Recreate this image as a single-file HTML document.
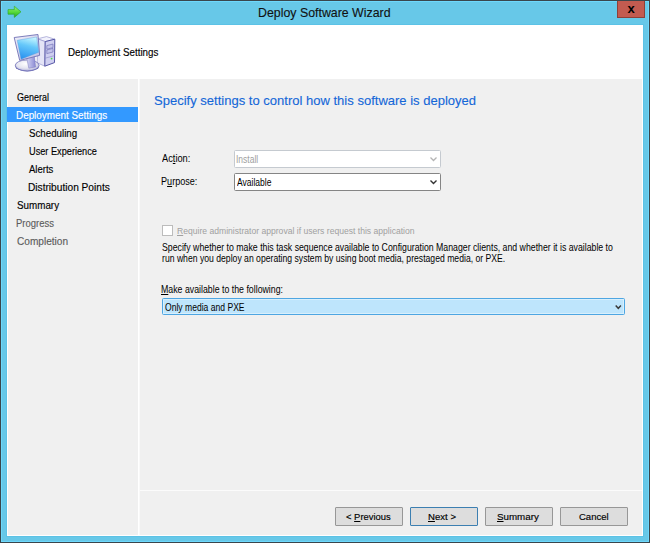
<!DOCTYPE html>
<html><head><meta charset="utf-8"><title>Deploy Software Wizard</title>
<style>
html,body{margin:0;padding:0;width:650px;height:543px;overflow:hidden;background:#67c8e8}
body{position:relative;font-family:"Liberation Sans",sans-serif}
.a{position:absolute;box-sizing:border-box}
.t{position:absolute;white-space:pre;transform-origin:0 0;font-family:"Liberation Sans",sans-serif}
.t u{text-decoration:underline;text-underline-offset:1px}
.btn{position:absolute;box-sizing:border-box;height:19px;width:68px;top:507px;background:#dddddd;border:1px solid #979797;border-radius:1px}
</style></head><body>
<!-- window frame -->
<div class="a" style="left:0;top:0;width:650px;height:543px;border:1px solid #3a464c"></div>
<div class="a" style="left:1px;top:1px;width:648px;height:541px;border:1px solid #6ed8fc"></div>
<!-- darker cyan edge around client -->
<div class="a" style="left:6px;top:24px;width:638px;height:513px;border:1px solid #5cc2e6"></div>
<!-- title icon: green arrow -->
<svg class="a" style="left:6px;top:4px" width="18" height="16" viewBox="0 0 18 16">
 <defs><linearGradient id="ga" x1="0" y1="0" x2="0" y2="1"><stop offset="0" stop-color="#9af47c"/><stop offset="0.55" stop-color="#54d83a"/><stop offset="1" stop-color="#28a826"/></linearGradient></defs>
 <path d="M2 5.6 H8.3 V2.2 L15 7.8 L8.3 13.4 V10.2 H2 Z" fill="url(#ga)" stroke="#2aa522" stroke-width="0.6"/>
</svg>
<!-- close button -->
<div class="a" style="left:617px;top:1px;width:28px;height:17px;background:#c35b50;border:1px solid #8e4038;border-top:none"></div>
<span class="a" style="left:627.5px;top:1px;font:bold 13px/15px 'Liberation Sans',sans-serif;color:#000">x</span>
<!-- client -->
<div class="a" style="left:7px;top:25px;width:636px;height:511px;background:#f0f0f0"></div>
<div class="a" style="left:7px;top:25px;width:636px;height:54px;background:#fff"></div>
<div class="a" style="left:7px;top:79px;width:1px;height:457px;background:#fff"></div>
<div class="a" style="left:642px;top:79px;width:1px;height:457px;background:#fff"></div>
<div class="a" style="left:7px;top:535px;width:636px;height:1px;background:#fff"></div>
<!-- nav separator -->
<div class="a" style="left:138px;top:79px;width:1px;height:456px;background:#fff"></div>
<div class="a" style="left:139px;top:79px;width:1px;height:456px;background:#f9f9f9"></div>
<!-- bottom bar separator -->
<div class="a" style="left:140px;top:490px;width:502px;height:1px;background:#fbfbfb"></div>
<!-- nav selection -->
<div class="a" style="left:7px;top:107px;width:131px;height:15px;background:#3399ff"></div>
<!-- header icon -->
<div class="a" style="left:10px;top:30px;width:50px;height:45px"><svg width="50" height="45" viewBox="10 30 50 45" style="position:absolute;left:0;top:0">
 <defs>
  <linearGradient id="scr" x1="0.6" y1="0" x2="0.35" y2="1"><stop offset="0" stop-color="#c4f6ff"/><stop offset="0.4" stop-color="#66c8fa"/><stop offset="1" stop-color="#2a92f0"/></linearGradient>
  <linearGradient id="frm" x1="0" y1="0" x2="1" y2="1"><stop offset="0" stop-color="#f0f0fa"/><stop offset="1" stop-color="#c0c0e4"/></linearGradient>
  <linearGradient id="twr" x1="0" y1="0" x2="1" y2="0"><stop offset="0" stop-color="#ececfa"/><stop offset="1" stop-color="#c8c8ec"/></linearGradient>
  <radialGradient id="bas" cx="0.45" cy="0.35" r="0.75"><stop offset="0" stop-color="#ffffff"/><stop offset="0.55" stop-color="#e4e4f0"/><stop offset="1" stop-color="#9a9ad0"/></radialGradient>
 </defs>
 <!-- tower -->
 <path d="M37.5 38.8 L46.5 36.6 L54.8 39.2 L45.2 41.6 Z" fill="#f2f2fc" stroke="#8a8ac6" stroke-width="0.6"/>
 <path d="M37.5 38.8 L45.2 41.6 L44.8 66.2 L37.2 62.8 Z" fill="#e4e4f6" stroke="#8a8ac6" stroke-width="0.6"/>
 <path d="M45.2 41.6 L54.8 39.2 L54.5 62.6 L44.8 66.2 Z" fill="#cfcff0" stroke="#5656a6" stroke-width="1"/>
 <path d="M46.8 45.6 L53 44 L53 47.6 L46.8 49.2 Z M46.8 50 L53 48.4 L53 52 L46.8 53.6 Z" fill="#c2c2ea" stroke="#6a6ab2" stroke-width="0.6"/>
 <path d="M45.2 58.2 L54.5 55.6" stroke="#8888c4" stroke-width="0.6"/>
 <circle cx="51.6" cy="58.6" r="0.9" fill="#44dd44"/>
 <!-- base -->
 <ellipse cx="27.2" cy="65.9" rx="12" ry="5.6" fill="#6a6ab4"/><ellipse cx="27.2" cy="65.4" rx="11.9" ry="5.5" fill="url(#bas)" stroke="#6c6cb4" stroke-width="0.7"/>
 <!-- neck -->
 <linearGradient id="nk" x1="0" y1="0" x2="1" y2="0"><stop offset="0" stop-color="#d8d8f4"/><stop offset="1" stop-color="#8a8ad4"/></linearGradient><path d="M26.5 57 L34.5 55.5 L35.5 67 L28.8 68.2 Z" fill="url(#nk)" stroke="#7a7abc" stroke-width="0.5"/>
 <!-- monitor frame -->
 <path d="M14.2 37.5 L38 34.5 L39.6 55.4 L19.7 60.4 Z" fill="url(#frm)" stroke="#7070b4" stroke-width="0.9"/>
 <!-- screen -->
 <path d="M17.2 40.3 L36.6 37 L38.8 52.2 L21 59.2 Z" fill="url(#scr)" stroke="#5a9ad8" stroke-width="0.4"/>
</svg>
</div>
<!-- action combo (disabled) -->
<div class="a" style="left:234px;top:150px;width:207px;height:18px;background:#fff;border:1px solid #c5cad0;border-radius:1.5px"></div>
<svg class="a" style="left:429px;top:156px" width="9" height="7" viewBox="0 0 9 7"><path d="M1.5 1.5 L4.5 4.5 L7.5 1.5" fill="none" stroke="#b4b4b4" stroke-width="1.3"/></svg>
<!-- purpose combo -->
<div class="a" style="left:234px;top:173px;width:207px;height:18px;background:#fff;border:1px solid #858585;border-radius:1.5px"></div>
<svg class="a" style="left:429px;top:179px" width="9" height="7" viewBox="0 0 9 7"><path d="M1.5 1.5 L4.5 4.5 L7.5 1.5" fill="none" stroke="#333" stroke-width="1.4"/></svg>
<!-- checkbox -->
<div class="a" style="left:162px;top:225px;width:11px;height:11px;background:#fff;border:1px solid #bcbcbc"></div>
<!-- make available combo -->
<div class="a" style="left:162px;top:298px;width:463px;height:17px;background:#bee5fc;border:1px solid #4ea6e2;border-radius:1.5px;box-shadow:inset 0 0 0 1px #d8effc"></div>
<svg class="a" style="left:614px;top:304px" width="9" height="7" viewBox="0 0 9 7"><path d="M1.7 1.6 L4.3 4.3 L6.9 1.6" fill="none" stroke="#3a3a3a" stroke-width="1.5"/></svg>
<!-- buttons -->
<div class="btn" style="left:335px"></div>
<div class="btn" style="left:410px;border-color:#3c7fb1"></div>
<div class="btn" style="left:485px"></div>
<div class="btn" style="left:560px"></div>
<span class="t" style="left:258.25px;top:6px;font-size:13px;line-height:13px;color:#111;transform:scaleX(0.9507);-webkit-text-stroke:0.12px currentColor">Deploy Software Wizard</span>
<span class="t" style="left:68.12px;top:47px;font-size:11px;line-height:11px;color:#000;transform:scaleX(0.8901);-webkit-text-stroke:0.15px currentColor">Deployment Settings</span>
<span class="t" style="left:153.84px;top:94px;font-size:13.5px;line-height:13.5px;color:#1467d8;transform:scaleX(0.9646);-webkit-text-stroke:0.12px currentColor">Specify settings to control how this software is deployed</span>
<span class="t" style="left:17.40px;top:92px;font-size:11px;line-height:11px;color:#000;transform:scaleX(0.8157);-webkit-text-stroke:0.15px currentColor">General</span>
<span class="t" style="left:16.10px;top:110px;font-size:11px;line-height:11px;color:#fff;transform:scaleX(0.8980);-webkit-text-stroke:0.15px currentColor">Deployment Settings</span>
<span class="t" style="left:29.01px;top:128px;font-size:11px;line-height:11px;color:#000;transform:scaleX(0.8854);-webkit-text-stroke:0.15px currentColor">Scheduling</span>
<span class="t" style="left:29.16px;top:146px;font-size:11px;line-height:11px;color:#000;transform:scaleX(0.8353);-webkit-text-stroke:0.15px currentColor">User Experience</span>
<span class="t" style="left:29.01px;top:164px;font-size:11px;line-height:11px;color:#000;transform:scaleX(0.8646);-webkit-text-stroke:0.15px currentColor">Alerts</span>
<span class="t" style="left:28.07px;top:182px;font-size:11px;line-height:11px;color:#000;transform:scaleX(0.9228);-webkit-text-stroke:0.15px currentColor">Distribution Points</span>
<span class="t" style="left:17.40px;top:200px;font-size:11px;line-height:11px;color:#000;transform:scaleX(0.8936);-webkit-text-stroke:0.15px currentColor">Summary</span>
<span class="t" style="left:16.34px;top:218px;font-size:11px;line-height:11px;color:#5c5c5c;transform:scaleX(0.8605);-webkit-text-stroke:0.15px currentColor">Progress</span>
<span class="t" style="left:17.20px;top:236px;font-size:11px;line-height:11px;color:#5c5c5c;transform:scaleX(0.9166);-webkit-text-stroke:0.15px currentColor">Completion</span>
<span class="t" style="left:161.59px;top:153px;font-size:10.5px;line-height:10.5px;color:#000;transform:scaleX(0.8819);">Ac<u>t</u>ion:</span>
<span class="t" style="left:160.73px;top:176px;font-size:10.5px;line-height:10.5px;color:#000;transform:scaleX(0.8653);">P<u>u</u>rpose:</span>
<span class="t" style="left:236.39px;top:154px;font-size:10.5px;line-height:10.5px;color:#a0a0a0;transform:scaleX(0.8077);">Install</span>
<span class="t" style="left:237.01px;top:177px;font-size:10.5px;line-height:10.5px;color:#000;transform:scaleX(0.8099);">Available</span>
<span class="t" style="left:177.00px;top:226px;font-size:9.5px;line-height:9.5px;color:#a0a0a0;transform:scaleX(0.9034);"><u>R</u>equire administrator approval if users request this application</span>
<span class="t" style="left:162.00px;top:242px;font-size:10.5px;line-height:10.5px;color:#000;transform:scaleX(0.8325);">Specify whether to make this task sequence available to Configuration Manager clients, and whether it is available to</span>
<span class="t" style="left:162.00px;top:253px;font-size:10.5px;line-height:10.5px;color:#000;transform:scaleX(0.8225);">run when you deploy an operating system by using boot media, prestaged media, or PXE.</span>
<span class="t" style="left:161.36px;top:284px;font-size:10.5px;line-height:10.5px;color:#000;transform:scaleX(0.8361);"><u>M</u>ake available to the following:</span>
<span class="t" style="left:164.60px;top:302px;font-size:10.5px;line-height:10.5px;color:#000;transform:scaleX(0.8165);">Only media and PXE</span>
<span class="t" style="left:346.40px;top:512px;font-size:9.5px;line-height:9.5px;color:#000;transform:scaleX(0.9911);-webkit-text-stroke:0.15px currentColor">&lt; <u>P</u>revious</span>
<span class="t" style="left:428.17px;top:512px;font-size:9.5px;line-height:9.5px;color:#000;transform:scaleX(1.0094);-webkit-text-stroke:0.15px currentColor"><u>N</u>ext &gt;</span>
<span class="t" style="left:496.79px;top:512px;font-size:9.5px;line-height:9.5px;color:#000;transform:scaleX(1.0295);-webkit-text-stroke:0.15px currentColor"><u>S</u>ummary</span>
<span class="t" style="left:579.00px;top:512px;font-size:9.5px;line-height:9.5px;color:#000;transform:scaleX(1.0000);-webkit-text-stroke:0.15px currentColor">Cancel</span>
</body></html>
